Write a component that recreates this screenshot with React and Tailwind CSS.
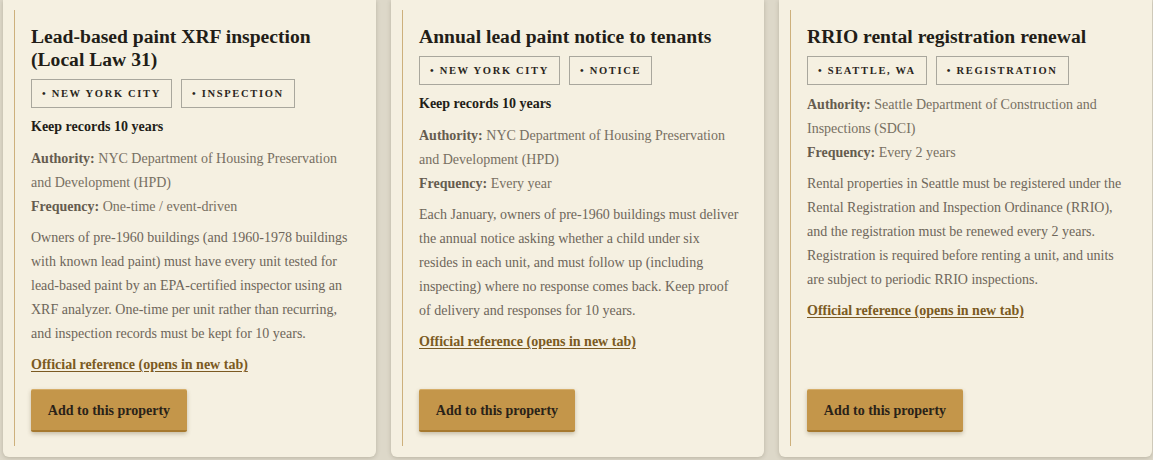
import React from 'react';

const items = [
  {
    title: 'Lead-based paint XRF inspection (Local Law 31)',
    tags: ['New York City', 'Inspection'],
    keep: 'Keep records 10 years',
    authority: 'NYC Department of Housing Preservation and Development (HPD)',
    frequency: 'One-time / event-driven',
    body: 'Owners of pre-1960 buildings (and 1960-1978 buildings with known lead paint) must have every unit tested for lead-based paint by an EPA-certified inspector using an XRF analyzer. One-time per unit rather than recurring, and inspection records must be kept for 10 years.',
  },
  {
    title: 'Annual lead paint notice to tenants',
    tags: ['New York City', 'Notice'],
    keep: 'Keep records 10 years',
    authority: 'NYC Department of Housing Preservation and Development (HPD)',
    frequency: 'Every year',
    body: 'Each January, owners of pre-1960 buildings must deliver the annual notice asking whether a child under six resides in each unit, and must follow up (including inspecting) where no response comes back. Keep proof of delivery and responses for 10 years.',
  },
  {
    title: 'RRIO rental registration renewal',
    tags: ['Seattle, WA', 'Registration'],
    keep: null,
    authority: 'Seattle Department of Construction and Inspections (SDCI)',
    frequency: 'Every 2 years',
    body: 'Rental properties in Seattle must be registered under the Rental Registration and Inspection Ordinance (RRIO), and the registration must be renewed every 2 years. Registration is required before renting a unit, and units are subject to periodic RRIO inspections.',
  },
];

function Card({ item }) {
  return (
    <div className="flex min-h-0 flex-col rounded-b-md bg-[#f5f0e1] pl-[11px] pr-[11px] pt-[10px] pb-[11px] shadow-[0_1px_4px_rgba(80,70,50,0.25)]">
      <div className="flex flex-1 flex-col border-l border-[#cdb07c] pl-[16px] pr-[14px] pt-[15px] pb-[14px]">
        <h2 className="text-[19.6px] font-bold leading-[23px] text-[#221d17]">{item.title}</h2>
        <div className="mt-[8px] flex gap-[9px]">
          {item.tags.map((tag) => (
            <span
              key={tag}
              className="flex h-[29px] items-center border border-[#a9a79d] px-[10px] text-[10.5px] font-bold uppercase tracking-[0.16em] text-[#2a2520]"
            >
              • {tag}
            </span>
          ))}
        </div>
        {item.keep && (
          <p className="mt-[9px] text-[14px] font-bold leading-[20px] text-[#221d17]">{item.keep}</p>
        )}
        <div className={`${item.keep ? 'mt-[10px]' : 'mt-[8px]'} text-[14px] leading-[1.7] text-[#776f62]`}>
          <p>
            <span className="font-bold text-[#655c4f]">Authority:</span> {item.authority}
          </p>
          <p>
            <span className="font-bold text-[#655c4f]">Frequency:</span> {item.frequency}
          </p>
        </div>
        <p className="mt-[8px] text-[14px] leading-[1.7] text-[#6e665a]">{item.body}</p>
        <a
          href="#"
          className="mt-[8px] self-start text-[14px] font-bold leading-[1.7] text-[#7b5a22] underline underline-offset-2"
        >
          Official reference (opens in new tab)
        </a>
        <div className="mt-auto pt-[12px]">
          <button className="h-[43px] w-[156px] rounded-[2px] border-t border-b-2 border-t-[#d6ae69] border-b-[#a6792f] bg-[#c4964a] text-[14px] font-bold text-[#2a2218] shadow-[0_2px_4px_rgba(90,70,30,0.3)]">
            Add to this property
          </button>
        </div>
      </div>
    </div>
  );
}

export default function App() {
  return (
    <div
      className="grid h-[460px] grid-cols-3 gap-[15px] bg-[#ddd8c9] pl-[3px] pr-[1px] pb-[3px]"
      style={{ fontFamily: '"Liberation Serif", "Times New Roman", serif' }}
    >
      {items.map((item) => (
        <Card key={item.title} item={item} />
      ))}
    </div>
  );
}
